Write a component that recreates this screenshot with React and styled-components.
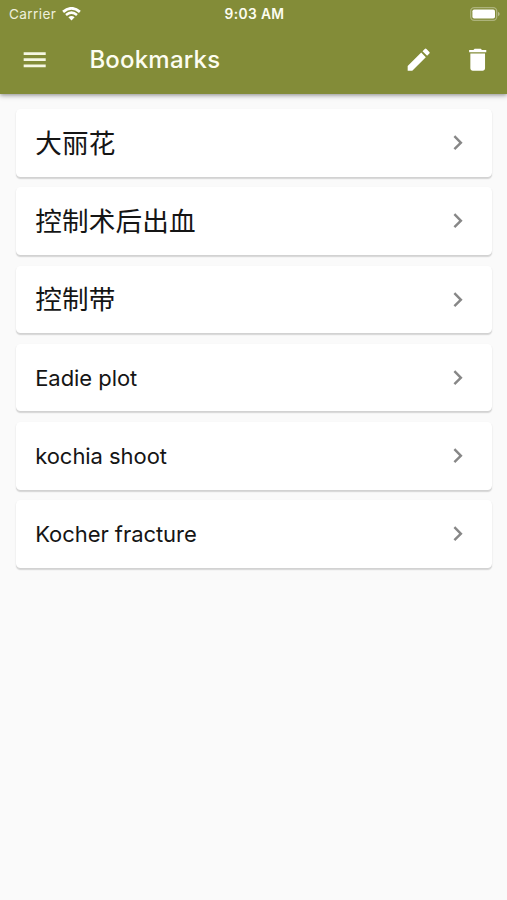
import React from "react";
import styled, { createGlobalStyle } from "styled-components";

const GlobalStyle = createGlobalStyle`
  * { box-sizing: border-box; }
  body {
    margin: 0;
    background: #fafafa;
    font-family: Inter, "Noto Sans CJK SC", sans-serif;
  }
`;

const Screen = styled.div`
  display: flex;
  flex-direction: column;
  min-height: 900px;
  background: #fafafa;
`;

const Header = styled.header`
  height: 93.5px;
  background: #838c38;
  color: #fff;
  box-shadow: 0 2px 5px rgba(0, 0, 0, 0.26), 0 1px 3px rgba(0, 0, 0, 0.18);
`;

const StatusBar = styled.div`
  display: grid;
  grid-template-columns: 1fr auto 1fr;
  align-items: center;
  height: 27px;
  padding: 0 7px 0 9px;
`;

const Carrier = styled.div`
  display: flex;
  align-items: center;
  gap: 5.5px;
  font-size: 13.6px;
  letter-spacing: 0.38px;
  color: #eef0dc;
`;

const Clock = styled.time`
  font-size: 13.8px;
  font-weight: 600;
  letter-spacing: 0.36px;
  color: #fdfdf0;
`;

const BatteryIcon = styled.svg`
  justify-self: end;
  display: block;
`;

const Toolbar = styled.div`
  display: flex;
  align-items: center;
  height: 66px;
  padding: 0 14.5px 0 20px;
`;

const Title = styled.h1`
  flex: 1;
  margin: 0 0 0 40px;
  font-size: 24px;
  line-height: 30px;
  font-weight: 500;
  letter-spacing: 0.2px;
  color: #fdfdf0;
`;

const IconButton = styled.button`
  display: flex;
  padding: 0;
  border: 0;
  background: none;
  color: ${(p) => p.$tint || "#fff"};
  & + & { margin-left: 29.4px; }
`;

const List = styled.ul`
  display: flex;
  flex-direction: column;
  gap: 10.6px;
  margin: 0;
  padding: 15.7px 14.7px 0 15.7px;
  list-style: none;
`;

const Card = styled.li`
  display: flex;
  align-items: center;
  justify-content: space-between;
  height: 67.6px;
  padding: 0 19.9px 0 19.5px;
  border-radius: 4.5px;
  background: #fff;
  color: #151515;
  box-shadow: 0 1.2px 1.2px rgba(0, 0, 0, 0.14), 0 1px 3px rgba(0, 0, 0, 0.04);
`;

const Label = styled.span`
  font-size: ${(p) => (p.$cjk ? 26.6 : 22)}px;
  line-height: 34px;
  letter-spacing: ${(p) => (p.$cjk ? 0.15 : -0.05)}px;
`;

const PATHS = {
  menu: "M3 18.100h18v-2.200H3v2.200zm0-5h18v-2.200H3v2.200zm0-7.200v2.200h18V5.900H3z",
  edit: "M3 17.25V21h3.75L17.81 9.94l-3.75-3.75L3 17.25zM20.71 7.04a.996.996 0 0 0 0-1.41l-2.34-2.34a.996.996 0 0 0-1.41 0l-1.83 1.83 3.75 3.75 1.83-1.83z",
  trash: "M6 19c0 1.1.9 2 2 2h8c1.1 0 2-.9 2-2V7H6v12zM19 4h-3.500l-1-1h-5l-1 1H5v2h14V4z",
  chevron: "M10 6 8.590 7.410 13.170 12l-4.580 4.590L10 18l6-6z",
};

const Icon = ({ name, size = 29.4 }) => (
  <svg width={size} height={size} viewBox="0 0 24 24" fill="currentColor">
    <path d={PATHS[name]} />
  </svg>
);

const Wifi = () => (
  <svg width="19" height="14" viewBox="0 0 19 14" fill="none" stroke="#fff">
    <path d="M1.100 4.900Q9.500-2.200 17.900 4.900" strokeWidth="2.800" />
    <path d="M4 8Q9.500 3.200 15 8" strokeWidth="2.500" />
    <path d="M6.400 10.300Q9.500 7.500 12.600 10.300L9.500 13.400Z" fill="#fff" stroke="none" />
  </svg>
);

const Battery = () => (
  <BatteryIcon width="30" height="14" viewBox="0 0 30 14">
    <rect x="0.700" y="0.700" width="26" height="12.600" rx="3.500" fill="none" stroke="#fff" strokeOpacity="0.34" strokeWidth="1.300" />
    <rect x="2.400" y="2.400" width="22.600" height="9.200" rx="1.800" fill="#fff" />
    <path d="M28 4.800Q29.700 5.600 29.700 7T28 9.200Z" fill="#fff" fillOpacity="0.42" />
  </BatteryIcon>
);

const bookmarks = [
  { text: "大丽花", cjk: true },
  { text: "控制术后出血", cjk: true },
  { text: "控制带", cjk: true },
  { text: "Eadie plot" },
  { text: "kochia shoot" },
  { text: "Kocher fracture" },
];

const Chevron = styled.span`
  display: flex;
  color: #878787;
`;

export default function App() {
  return (
    <Screen>
      <GlobalStyle />
      <Header>
        <StatusBar>
          <Carrier>Carrier <Wifi /></Carrier>
          <Clock>9:03 AM</Clock>
          <Battery />
        </StatusBar>
        <Toolbar>
          <IconButton aria-label="Menu" $tint="#f6f7e2"><Icon name="menu" /></IconButton>
          <Title>Bookmarks</Title>
          <IconButton aria-label="Edit"><Icon name="edit" /></IconButton>
          <IconButton aria-label="Delete"><Icon name="trash" /></IconButton>
        </Toolbar>
      </Header>
      <List>
        {bookmarks.map(({ text, cjk }) => (
          <Card key={text}>
            <Label $cjk={cjk} lang={cjk ? "zh-CN" : "en"}>{text}</Label>
            <Chevron><Icon name="chevron" /></Chevron>
          </Card>
        ))}
      </List>
    </Screen>
  );
}
